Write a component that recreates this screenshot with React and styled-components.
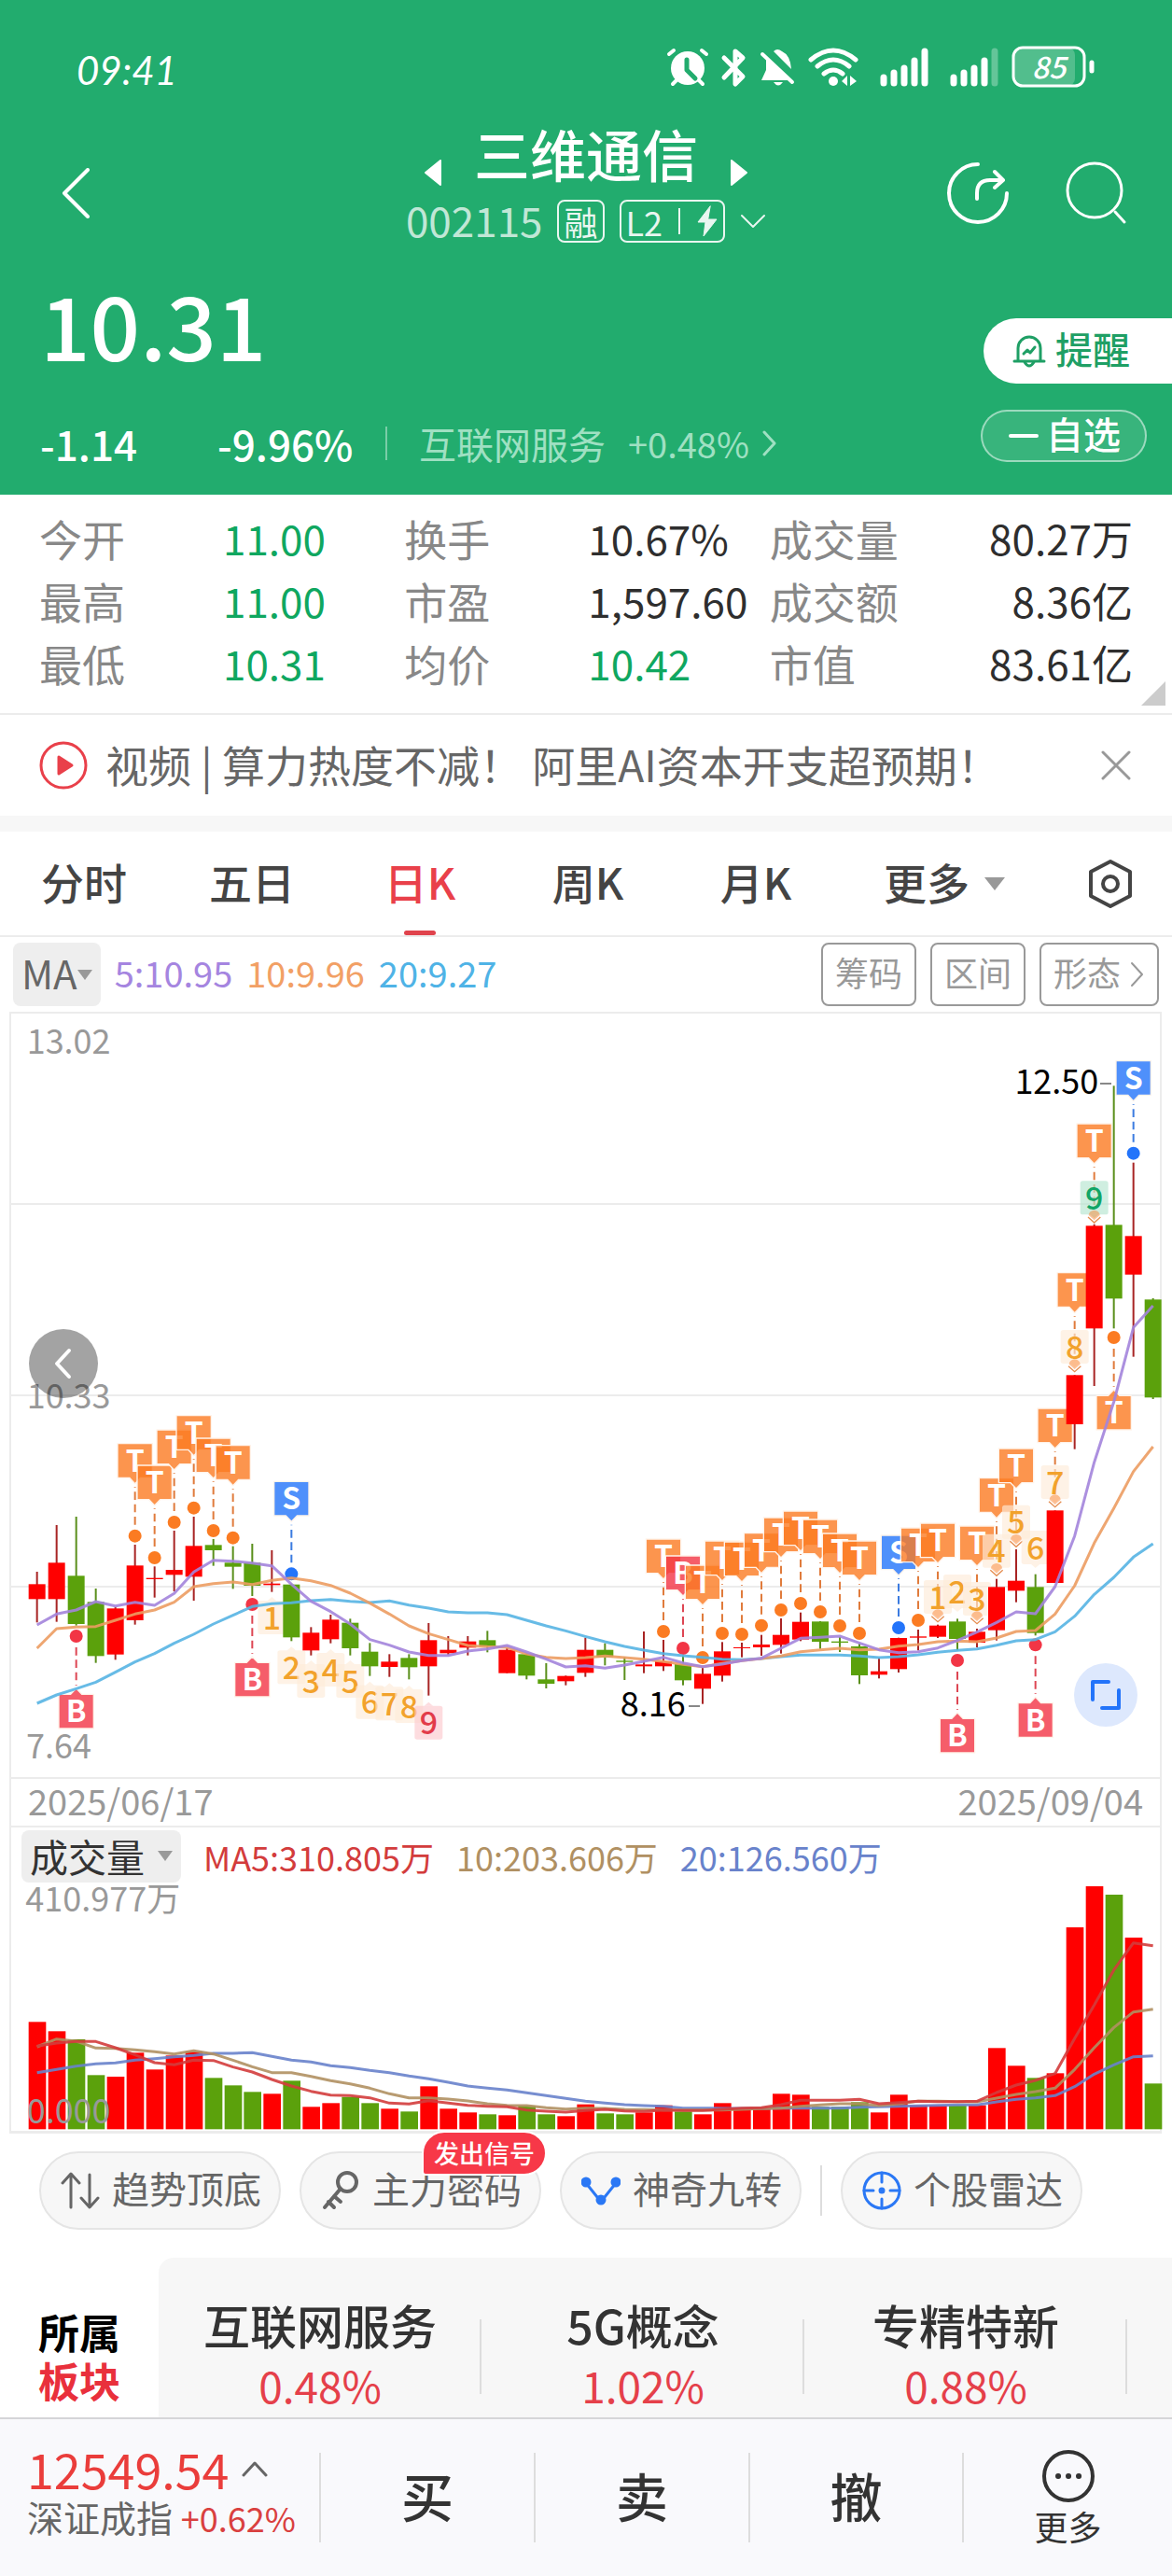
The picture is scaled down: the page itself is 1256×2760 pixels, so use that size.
import React from 'react'
import styled, { createGlobalStyle, css } from 'styled-components'

const GREEN = '#22ac6e'
const UP = '#ff0000'
const DOWN = '#5ba10c'
const FONT = '"Noto Sans CJK SC", "Noto Sans", sans-serif'

const stats = [
  [
    { label: '今开', value: '11.00', green: true },
    { label: '最高', value: '11.00', green: true },
    { label: '最低', value: '10.31', green: true },
  ],
  [
    { label: '换手', value: '10.67%' },
    { label: '市盈', value: '1,597.60' },
    { label: '均价', value: '10.42', green: true },
  ],
  [
    { label: '成交量', value: '80.27万' },
    { label: '成交额', value: '8.36亿' },
    { label: '市值', value: '83.61亿' },
  ],
]

const tabs = ['分时', '五日', '日K', '周K', '月K']

const sectors = [
  { name: '互联网服务', change: '0.48%' },
  { name: '5G概念', change: '1.02%' },
  { name: '专精特新', change: '0.88%' },
]

// [rising, high, body top, body bottom, low] in chart units, three units to a pixel
const candles = [
  [1, 1812, 1852, 1900, 1975], [1, 1662, 1783, 1900, 1973], [0, 1635, 1825, 1980, 1985],
  [0, 1866, 1909, 2083, 2105], [1, 1925, 1930, 2078, 2095], [1, 1725, 1792, 1968, 1982],
  [1, 1795, 1832, 1836, 1895], [1, 1680, 1806, 1822, 1875], [1, 1635, 1729, 1828, 1905],
  [0, 1707, 1726, 1743, 1793], [0, 1730, 1783, 1796, 1867], [0, 1722, 1783, 1857, 1890],
  [1, 1743, 1850, 1855, 1877], [0, 1850, 1853, 2023, 2035], [1, 1990, 2008, 2065, 2081],
  [1, 1950, 1966, 2029, 2042], [0, 1963, 1976, 2058, 2081], [0, 2041, 2069, 2116, 2147],
  [1, 2077, 2101, 2118, 2150], [0, 2077, 2089, 2119, 2158], [1, 1977, 2032, 2116, 2210],
  [1, 2019, 2063, 2074, 2080], [1, 2019, 2036, 2056, 2081], [0, 2002, 2032, 2052, 2071],
  [1, 2057, 2063, 2138, 2138], [0, 2074, 2077, 2146, 2158], [0, 2106, 2158, 2172, 2187],
  [1, 2146, 2147, 2164, 2177], [1, 2024, 2063, 2137, 2150], [0, 2042, 2063, 2087, 2113],
  [0, 2086, 2098, 2102, 2160], [1, 2004, 2110, 2116, 2138], [1, 2031, 2100, 2116, 2131],
  [0, 2080, 2109, 2161, 2177], [1, 2120, 2140, 2188, 2237], [1, 2038, 2068, 2146, 2165],
  [1, 2040, 2055, 2058, 2087], [1, 2015, 2046, 2055, 2082], [1, 1962, 2015, 2047, 2075],
  [1, 1943, 1973, 2030, 2035], [0, 1971, 1972, 2037, 2060], [0, 2022, 2036, 2040, 2070],
  [0, 2042, 2052, 2145, 2173], [1, 2090, 2132, 2143, 2155], [1, 2024, 2025, 2125, 2136],
  [1, 1998, 2020, 2024, 2065], [1, 1982, 1985, 2021, 2025], [0, 1963, 1972, 2028, 2065],
  [1, 1995, 2005, 2040, 2055], [1, 1835, 1861, 2000, 2033], [1, 1740, 1841, 1873, 1910],
  [0, 1820, 1861, 2009, 2017], [1, 1615, 1615, 1848, 1848], [1, 1180, 1180, 1338, 1418],
  [1, 695, 700, 1030, 1215], [0, 250, 697, 934, 1030], [1, 497, 733, 857, 1121],
  [0, 933, 937, 1252, 1257],
]

const ma5 = [
  1983, 1948, 1935, 1908, 1922, 1910, 1920, 1882, 1813, 1775, 1778, 1784, 1793, 1852, 1907,
  1940, 1980, 2030, 2048, 2070, 2081, 2081, 2067, 2060, 2049, 2070, 2093, 2118, 2114, 2122,
  2112, 2100, 2087, 2105, 2117, 2109, 2098, 2090, 2058, 2026, 2023, 2019, 2041, 2063, 2072,
  2069, 2057, 2033, 2006, 1975, 1941, 1947, 1860, 1697, 1460, 1266, 1027, 957,
]
const ma10 = [
  2058, 1995, 1990, 1988, 1968, 1948, 1935, 1910, 1860, 1850, 1845, 1853, 1840, 1832, 1841,
  1856, 1881, 1913, 1948, 1986, 2011, 2030, 2049, 2053, 2055, 2076, 2087, 2091, 2088, 2083,
  2088, 2093, 2101, 2110, 2117, 2107, 2098, 2091, 2083, 2069, 2063, 2058, 2063, 2061, 2051,
  2046, 2037, 2035, 2037, 2025, 2004, 2001, 1948, 1857, 1720, 1608, 1490, 1410,
]
const ma20 = [
  2235, 2208, 2188, 2167, 2135, 2102, 2075, 2042, 2013, 1980, 1952, 1924, 1915, 1912, 1905,
  1901, 1907, 1911, 1906, 1919, 1929, 1941, 1944, 1944, 1950, 1968, 1986, 2002, 2020, 2037,
  2052, 2064, 2075, 2082, 2087, 2093, 2095, 2091, 2085, 2080, 2080, 2080, 2083, 2088, 2085,
  2079, 2071, 2065, 2060, 2048, 2034, 2030, 2005, 1955, 1885, 1830, 1765, 1722,
]

// [day, letter, dot position, flag under the dot]
const signals = [
  [2, 'B', 2019, 1], [5, 'T', 1697], [6, 'T', 1767], [7, 'T', 1653], [8, 'T', 1607],
  [9, 'T', 1680], [10, 'T', 1703], [11, 'B', 1917, 1], [13, 'S', 1819], [32, 'T', 2004],
  [33, 'B', 2058], [34, 'T', 2088], [35, 'T', 2010], [36, 'T', 2013], [37, 'T', 1985],
  [38, 'T', 1935], [39, 'T', 1914], [40, 'T', 1941], [41, 'T', 1986], [42, 'T', 2010],
  [44, 'S', 1992], [45, 'T', 1968], [46, 'T', 1953], [47, 'B', 2097, 1], [48, 'T', 1962],
  [49, 'T', 1808], [50, 'T', 1713], [51, 'B', 2047, 1], [52, 'T', 1584], [53, 'T', 1148],
  [54, 'T', 669], [55, 'T', 1059, 1], [56, 'S', 467],
]

// [day, count, box top, box under the candle]
const counts = [
  [12, 1, 1905, 1], [13, 2, 2065, 1], [14, 3, 2109, 1], [15, 4, 2073, 1], [16, 5, 2109, 1],
  [17, 6, 2177, 1], [18, 7, 2182, 1], [19, 8, 2190, 1], [20, 9, 2243, 1], [46, 1, 1839],
  [47, 2, 1821], [48, 3, 1845], [49, 4, 1691], [50, 5, 1598], [51, 6, 1680], [52, 7, 1470],
  [53, 8, 1035], [54, 9, 556],
]

const volumes = [
  797, 827, 853, 968, 973, 896, 950, 905, 893, 977, 1001, 1022, 1028, 986, 1070, 1058, 1038,
  1058, 1076, 1085, 1004, 1076, 1088, 1094, 1097, 1067, 1094, 1100, 1062, 1091, 1094, 1088,
  1065, 1085, 1094, 1058, 1076, 1075, 1028, 1031, 1070, 1070, 1055, 1088, 1031, 1065, 1065,
  1065, 1065, 881, 938, 977, 962, 493, 361, 388, 526, 995,
]
const vol5 = [
  875, 865, 860, 860, 880, 903, 928, 935, 920, 921, 942, 958, 982, 1003, 1020, 1032, 1034,
  1041, 1058, 1061, 1050, 1058, 1065, 1068, 1070, 1080, 1084, 1087, 1082, 1078, 1083, 1085,
  1080, 1082, 1082, 1078, 1074, 1073, 1063, 1049, 1049, 1049, 1046, 1060, 1056, 1052, 1053,
  1053, 1052, 1024, 1000, 985, 963, 850, 743, 630, 543, 552,
]
const vol10 = [
  877, 852, 859, 881, 882, 887, 893, 900, 890, 900, 920, 941, 960, 960, 972, 986, 996, 1010,
  1028, 1041, 1041, 1045, 1051, 1060, 1065, 1066, 1073, 1077, 1074, 1075, 1078, 1079, 1080,
  1080, 1080, 1080, 1078, 1076, 1074, 1068, 1064, 1060, 1060, 1066, 1060, 1052, 1052, 1053,
  1054, 1042, 1030, 1021, 1010, 950, 880, 815, 765, 756,
]
const vol20 = [
  960, 950, 939, 932, 929, 920, 915, 909, 905, 898, 898, 896, 908, 920, 926, 938, 944, 953,
  960, 971, 980, 991, 1003, 1010, 1016, 1025, 1034, 1043, 1052, 1058, 1063, 1066, 1068, 1074,
  1074, 1075, 1075, 1075, 1074, 1074, 1074, 1074, 1071, 1070, 1068, 1067, 1065, 1064, 1064,
  1054, 1046, 1041, 1034, 1005, 965, 935, 909, 906,
]

const dayX = (i) => Math.round(119 + i * 62.95)
const toPoints = (values) => values.map((y, i) => `${dayX(i)},${y}`).join(' ')
const signalColors = {
  T: { fill: '#fb7b22', line: '#e07b3c' },
  B: { fill: '#f23545', line: '#dd4653' },
  S: { fill: '#2374fa', line: '#3b7be0' },
}

const hasCountAbove = (day) => counts.some((c) => c[0] === day && !c[3])

const Signal = ({ day, letter, y, below }) => {
  const x = dayX(day)
  const { fill, line } = signalColors[letter]
  const d = below ? 1 : -1
  const top = below ? y + 187 : y - 297
  return (
    <g>
      <line x1={x} x2={x} y1={y + d * 36} y2={y + d * 158} stroke={line} strokeWidth="6" strokeDasharray="26 14" />
      <path
        d={`M${x - 56} ${y + d * 297}H${x + 56}V${y + d * 187}H${x + 18}L${x} ${y + d * 168}L${x - 18} ${y + d * 187}H${x - 56}Z`}
        fill={fill}
        fillOpacity="0.8"
        stroke="#fff3ea"
        strokeWidth="4"
        strokeLinejoin="round"
      />
      {(below || !hasCountAbove(day)) && <circle cx={x} cy={y} r="21" fill={fill} />}
      <text x={x} y={top + 90} fontSize="96" fontWeight="700" fill="#fff" textAnchor="middle">{letter}</text>
    </g>
  )
}

const Count = ({ day, n, y, below }) => {
  const x = dayX(day)
  let box = '#fdebd8'
  let ink = '#f2a22c'
  if (n === 9) {
    box = below ? '#fcc9ce' : '#b5e5d0'
    ink = below ? '#e23b4a' : '#12a566'
  }
  const tip = below ? y - 12 : y + 120
  const edge = below ? y : y + 108
  return (
    <g>
      <rect x={x - 45} y={y} width="90" height="108" rx="8" fill={box} fillOpacity="0.65" />
      <path d={`M${x - 14} ${edge}L${x} ${tip}L${x + 14} ${edge}Z`} fill={box} fillOpacity="0.65" />
      {!below && day !== 47 && day !== 51 && (
        <g>
          <path d={`M${x - 18} ${y + 110}a18 16 0 0 1 36 0l-18 16z`} fill="#fb7b22" fillOpacity="0.45" />
          <path d={`M${x - 20} ${y + 116}l20 18l20 -18`} fill="none" stroke="#e58d50" strokeWidth="4" />
        </g>
      )}
      <text x={x} y={y + 92} fontSize="102" fill={ink} fontWeight="500" textAnchor="middle">{n}</text>
    </g>
  )
}

const PriceChart = () => (
  <Chart viewBox="36 18 3693 2454" role="img" aria-label="日K线图">
    {[630, 1245, 1860].map((y) => (
      <line key={y} x1="36" x2="3729" y1={y} y2={y} stroke="#ececec" strokeWidth="6" />
    ))}
    <g fontSize="108" fill="#999">
      <text x="86" y="148">13.02</text>
      <text x="86" y="1288">10.33</text>
      <text x="84" y="2412">7.64</text>
    </g>
    {signals.map(([day, letter, y, below]) => (
      <Signal key={day} day={day} letter={letter} y={y} below={below} />
    ))}
    {counts.map(([day, n, y, below]) => (
      <Count key={day} day={day} n={n} y={y} below={below} />
    ))}
    {candles.map(([rising, high, top, bottom, low], i) => (
      <g key={i} fill={rising ? UP : DOWN}>
        <rect x={dayX(i) - 3} y={high} width="6" height={low - high} fill={rising ? '#a82424' : '#5a8f1c'} />
        <rect x={dayX(i) - 27} y={top} width="54" height={bottom - top} />
      </g>
    ))}
    <g fill="none" strokeWidth="9" strokeLinejoin="round" strokeOpacity="0.9">
      <polyline points={toPoints(ma20)} stroke="#56b4e3" />
      <polyline points={toPoints(ma10)} stroke="#ec9c62" />
      <polyline points={toPoints(ma5)} stroke="#a384dc" />
    </g>
    <g fontSize="108" fill="#000" textAnchor="end">
      <text x="3532" y="277">12.50</text>
      <text x="2204" y="2276">8.16</text>
    </g>
    <path d="M3537 243H3573M2214 2244H2250" stroke="#888" strokeWidth="6" />
  </Chart>
)

const VolumeChart = () => (
  <Chart viewBox="36 358 3693 789" role="img" aria-label="成交量">
    {volumes.map((y, i) => (
      <rect key={i} x={dayX(i) - 27} y={y} width="56" height={1142 - y} fill={candles[i][0] ? UP : DOWN} />
    ))}
    <g fill="none" strokeWidth="9" strokeLinejoin="round" strokeOpacity="0.9">
      <polyline points={toPoints(vol20)} stroke="#6882cb" />
      <polyline points={toPoints(vol10)} stroke="#b09062" />
      <polyline points={toPoints(vol5)} stroke="#d33c3c" />
    </g>
    <g fontSize="108" fill="#999">
      <text x="82" y="442">410.977万</text>
      <text x="86" y="1124">0.000</text>
    </g>
  </Chart>
)

const StatusIcons = () => (
  <svg width="462" height="46" viewBox="712 49 462 46" fill="none" stroke="#fff" strokeLinecap="round" strokeLinejoin="round" aria-hidden="true">
    <circle cx="737" cy="73" r="18" fill="#fff" stroke="none" />
    <path d="M717 58l5-4M757 58l-5-4M721 90l5-5M753 90l-5-5" strokeWidth="4" />
    <path d="M736 64v11l9 9" stroke={GREEN} strokeWidth="5" />
    <path d="M776 62l20 20l-8 8V55l8 7l-20 21" strokeWidth="5" />
    <path d="M821 61v14l-5 11h29zM829 55q4-4 9 0q9 4 10 19z" fill="#fff" stroke="none" />
    <path d="M817 58l32 30" strokeWidth="4" />
    <path d="M829 88h10q-5 7-10 0z" fill="#fff" stroke="none" />
    <path d="M869 64q24-20 48 0M876 71q17-14 34 0M883 79q10-8 20 0" strokeWidth="5" />
    <circle cx="893" cy="87" r="5" fill="#fff" stroke="none" />
    <path d="M902 87l6-6v11zM911 81v11l7-5z" fill="#fff" stroke="none" />
    <path d="M947 83v6M958 78v11M969 73v16M980 65v24M991 55v34M1022 83v6M1033 78v11M1044 73v16M1055 65v24" strokeWidth="7" />
    <path d="M1066 55v34" strokeWidth="7" strokeOpacity="0.3" />
    <rect x="1087" y="51" width="65" height="41" fill="#fff" fillOpacity="0.22" stroke="none" rx="8" />
    <rect x="1086" y="51" width="76" height="41" rx="10" strokeWidth="3" />
    <path d="M1170 67v9" strokeWidth="5" />
    <text x="1124" y="84" fontSize="32" fontStyle="italic" fontWeight="500" fill="#fff" stroke="none" textAnchor="middle">85</text>
  </svg>
)

const Icon = ({ size = 48, w = size, h = size, box = '0 0 24 24', sw = 2, children }) => (
  <svg width={w} height={h} viewBox={box} fill="none" stroke="currentColor" strokeWidth={sw} strokeLinecap="round" strokeLinejoin="round" aria-hidden="true">
    {children}
  </svg>
)

const App = () => {
  return (
    <Page>
      <GlobalStyle />
      <Header>
        <StatusBar>
          <Clock>09:41</Clock>
          <StatusIcons />
        </StatusBar>
        <NavBar>
          <NavSide>
            <IconButton aria-label="返回">
              <Icon w={30} h={54} box="0 0 30 54" sw={4}><path d="M28 2L3 27L28 52" /></Icon>
            </IconButton>
          </NavSide>
          <TitleBlock>
            <TitleRow>
              <IconButton aria-label="上一只">
                <Icon w={20} h={30} box="0 0 20 30"><path d="M18 2v26L2 15z" fill="currentColor" /></Icon>
              </IconButton>
              <Title>三维通信</Title>
              <IconButton aria-label="下一只">
                <Icon w={20} h={30} box="0 0 20 30"><path d="M2 2v26L18 15z" fill="currentColor" /></Icon>
              </IconButton>
            </TitleRow>
            <CodeRow>
              <Code>002115</Code>
              <Chip>融</Chip>
              <Chip>
                L2
                <ChipDivider />
                <Icon w={24} h={34} box="0 0 24 34" sw={1}><path d="M15 1L2 18h8L8 33L22 15h-9z" fill="currentColor" /></Icon>
              </Chip>
              <Icon w={28} h={16} box="0 0 28 16" sw={2}><path d="M2 2l12 12L26 2" /></Icon>
            </CodeRow>
          </TitleBlock>
          <NavSide $end>
            <IconButton aria-label="分享">
              <Icon size={68} box="0 0 68 68" sw={4}>
                <path d="M34 3A31 31 0 1 0 65 34M33 40v-6q0-14 14-14h12M52 11l9 9l-9 8" />
              </Icon>
            </IconButton>
            <IconButton aria-label="搜索">
              <Icon size={70} box="0 0 70 70" sw={3}>
                <circle cx="33" cy="32" r="29" />
                <path d="M55 55l10 11" />
              </Icon>
            </IconButton>
          </NavSide>
        </NavBar>
        <Quote>
          <QuoteMain>
            <Price>10.31</Price>
            <ChangeRow>
              <Change $width={190}>-1.14</Change>
              <Change $width={180}>-9.96%</Change>
              <SectorLink href="#sector">
                互联网服务
                <span>+0.48%</span>
                <Icon w={16} h={28} box="0 0 16 28" sw={3}><path d="M2 2l11 12L2 26" /></Icon>
              </SectorLink>
            </ChangeRow>
          </QuoteMain>
          <QuoteActions>
            <RemindButton>
              <Icon size={40} box="0 0 40 40" sw={3}>
                <path d="M8 31V17a12 12 0 0 1 24 0v14M4 31h32M15 32q5 8 10 0M14 23l4-4l3 3l5-6" />
              </Icon>
              <Label>提醒</Label>
            </RemindButton>
            <WatchButton>
              <Icon w={32} h={4} box="0 0 32 4" sw={4}><path d="M2 2h28" /></Icon>
              <Label>自选</Label>
            </WatchButton>
          </QuoteActions>
        </Quote>
      </Header>

      <Stats>
        {stats.map((column, i) => (
          <StatColumn key={i}>
            {column.map((stat) => (
              <Stat key={stat.label} $spread={i === 2}>
                <dt>{stat.label}</dt>
                <StatValue $green={stat.green}>{stat.value}</StatValue>
              </Stat>
            ))}
          </StatColumn>
        ))}
        <Corner />
      </Stats>

      <News>
        <Icon size={54} box="0 0 54 54" sw={3}>
          <circle cx="27" cy="27" r="24" />
          <path d="M22 18v18l14-9z" fill="currentColor" />
        </Icon>
        <NewsLink href="#news">视频 | 算力热度不减！ 阿里AI资本开支超预期！</NewsLink>
        <CloseButton aria-label="关闭">
          <Icon size={32} box="0 0 32 32" sw={3}><path d="M2 2l28 28M30 2L2 30" /></Icon>
        </CloseButton>
      </News>

      <Tabs>
        {tabs.map((tab) => (
          <Tab key={tab} $active={tab === '日K'}><Label>{tab}</Label></Tab>
        ))}
        <Tab><Label>更多</Label><Caret $size={11} /></Tab>
        <Tab aria-label="设置">
          <Icon w={50} h={54} box="0 0 50 54" sw={4}>
            <path d="M25 3L46 14v26L25 51L4 40V14z" />
            <circle cx="25" cy="27" r="8" />
          </Icon>
        </Tab>
      </Tabs>

      <MaRow>
        <MaButton><Label>MA</Label><Caret $size={8} /></MaButton>
        <Legend $color="#a585e0">5:10.95</Legend>
        <Legend $color="#f2a065">10:9.96</Legend>
        <Legend $color="#4fb3e6">20:9.27</Legend>
        <OutlineButtons>
          <OutlineButton><Label>筹码</Label></OutlineButton>
          <OutlineButton><Label>区间</Label></OutlineButton>
          <OutlineButton>
            <Label>形态</Label>
            <Icon w={16} h={28} box="0 0 16 28" sw={2}><path d="M2 2l11 12L2 26" /></Icon>
          </OutlineButton>
        </OutlineButtons>
      </MaRow>

      <ChartPanel>
        <PriceArea>
          <PriceChart />
          <PreviousButton aria-label="向前">
            <Icon w={20} h={34} box="0 0 20 34" sw={4}><path d="M16 3L3 17l13 14" /></Icon>
          </PreviousButton>
          <ExpandButton aria-label="全屏">
            <Icon size={34} box="0 0 34 34" sw={4}><path d="M20 3H3v19M31 12v19H13" /></Icon>
          </ExpandButton>
        </PriceArea>
        <DateRow>
          <time>2025/06/17</time>
          <time>2025/09/04</time>
        </DateRow>
        <VolumeHeader>
          <VolumeButton>成交量<Caret $size={8} /></VolumeButton>
          <VolumeLegend $color="#d33c3c">MA5:310.805万</VolumeLegend>
          <VolumeLegend $color="#b09062">10:203.606万</VolumeLegend>
          <VolumeLegend $color="#6882cb">20:126.560万</VolumeLegend>
        </VolumeHeader>
        <VolumeChart />
      </ChartPanel>

      <Tools>
        <Tool>
          <Icon size={42} box="0 0 42 42" sw={3}>
            <path d="M11 39V4M2 13l9-10l9 10M31 4v34M22 29l9 10l9-10" />
          </Icon>
          <Label>趋势顶底</Label>
        </Tool>
        <Tool>
          <Icon size={42} box="0 0 42 42" sw={4}>
            <circle cx="28" cy="12" r="10" />
            <path d="M21 19L4 39M14 27l7 6M8 33l6 6" />
          </Icon>
          <Label>主力密码</Label>
          <Badge>发出信号</Badge>
        </Tool>
        <Tool>
          <BlueIcon>
            <Icon size={42} box="0 0 42 42" sw={3}>
              <path d="M5 13l16 20L37 13" />
              <circle cx="5" cy="12" r="4" fill="currentColor" />
              <circle cx="37" cy="12" r="4" fill="currentColor" />
              <circle cx="21" cy="31" r="4" fill="currentColor" />
            </Icon>
          </BlueIcon>
          <Label>神奇九转</Label>
        </Tool>
        <ToolDivider />
        <Tool>
          <BlueIcon>
            <Icon size={42} box="0 0 42 42" sw={3}>
              <circle cx="21" cy="21" r="19" />
              <path d="M21 2v10M21 30v10M2 21h10M30 21h10" />
              <circle cx="21" cy="21" r="2" fill="currentColor" />
            </Icon>
          </BlueIcon>
          <Label>个股雷达</Label>
        </Tool>
      </Tools>

      <Sectors id="sector">
        <SectorTitle>
          所属
          <em>板块</em>
        </SectorTitle>
        <SectorList>
          {sectors.map((sector) => (
            <Sector key={sector.name}>
              <SectorName>{sector.name}</SectorName>
              <SectorChange>{sector.change}</SectorChange>
            </Sector>
          ))}
        </SectorList>
      </Sectors>

      <BottomBar>
        <IndexBlock>
          <IndexValue>
            12549.54
            <Icon w={28} h={18} box="0 0 28 18" sw={3}><path d="M2 16L14 3l12 13" /></Icon>
          </IndexValue>
          <IndexName>
            深证成指 <b>+0.62%</b>
          </IndexName>
        </IndexBlock>
        <TradeButton>买</TradeButton>
        <TradeButton>卖</TradeButton>
        <TradeButton>撤</TradeButton>
        <MoreButton>
          <Icon size={58} box="0 0 58 58" sw={4}>
            <circle cx="29" cy="29" r="26" />
            <path d="M18 29h.1M29 29h.1M40 29h.1" strokeWidth="6" />
          </Icon>
          更多
        </MoreButton>
      </BottomBar>
    </Page>
  )
}

export default App

const GlobalStyle = createGlobalStyle`
  * {
    box-sizing: border-box;
  }

  body {
    margin: 0;
    background: #fff;
    font-family: ${FONT};
    color: #333;
  }

  button {
    margin: 0;
    padding: 0;
    border: 0;
    background: none;
    color: inherit;
    font: inherit;
    cursor: pointer;
  }

  a {
    color: inherit;
    text-decoration: none;
  }

  svg {
    display: block;
    flex: none;
  }
`;

const Page = styled.main`
  overflow: hidden;
  white-space: nowrap;
`;

const Label = styled.span`
  padding-bottom: 6px;
`;

const Header = styled.header`
  background: ${GREEN};
  color: #fff;
`;

const StatusBar = styled.div`
  display: flex;
  align-items: center;
  justify-content: space-between;
  height: 132px;
  padding: 12px 82px 0;
`;

const Clock = styled.time`
  padding-top: 6px;
  font-family: Lato, sans-serif;
  font-size: 42px;
  font-style: italic;
  line-height: 48px;
`;

const NavBar = styled.nav`
  display: grid;
  grid-template-columns: 1fr auto 1fr;
  align-items: center;
`;

const NavSide = styled.div`
  display: flex;
  align-items: center;
  justify-content: ${(p) => (p.$end ? 'flex-end' : 'flex-start')};
  gap: 58px;
  padding: 22px 46px 0 66px;
`;

const IconButton = styled.button`
  display: flex;
`;

const TitleBlock = styled.div`
  display: flex;
  flex-direction: column;
  align-items: center;
  gap: 14px;
`;

const TitleRow = styled.div`
  display: flex;
  align-items: flex-end;
  gap: 34px;
`;

const Title = styled.h1`
  margin: 0;
  padding-bottom: 4px;
  font-size: 60px;
  font-weight: 500;
  line-height: 64px;
`;

const CodeRow = styled.div`
  display: flex;
  align-items: center;
  gap: 16px;
  height: 46px;
  opacity: 0.9;
`;

const Code = styled.span`
  padding-bottom: 4px;
  font-size: 44px;
  line-height: 46px;
  opacity: 0.8;
`;

const Chip = styled.span`
  display: flex;
  align-items: center;
  gap: 17px;
  height: 46px;
  padding: 0 5px;
  border: 2px solid #fff;
  border-radius: 8px;
  font-size: 36px;
  line-height: 40px;
`;

const ChipDivider = styled.i`
  width: 2px;
  height: 28px;
  background: #fff;
`;

const Quote = styled.section`
  display: flex;
  justify-content: space-between;
  padding: 36px 0 27px 43px;
`;

const QuoteMain = styled.div`
  display: flex;
  flex-direction: column;
  gap: 51px;
`;

const Price = styled.strong`
  font-size: 94px;
  font-weight: 500;
  line-height: 100px;
`;

const ChangeRow = styled.div`
  display: flex;
  align-items: center;
  line-height: 56px;
`;

const Change = styled.span`
  min-width: ${(p) => p.$width}px;
  font-size: 44px;
  font-weight: 500;
`;

const SectorLink = styled.a`
  display: flex;
  align-items: center;
  gap: 14px;
  height: 36px;
  padding-left: 34px;
  border-left: 2px solid rgba(255, 255, 255, 0.4);
  color: #9fe0c2;
  font-size: 40px;

  span {
    padding-left: 10px;
    font-size: 38px;
  }
`;

const QuoteActions = styled.div`
  display: flex;
  flex-direction: column;
  align-items: flex-end;
  gap: 28px;
  padding-top: 45px;
`;

const RemindButton = styled.button`
  display: flex;
  align-items: center;
  gap: 8px;
  height: 70px;
  padding: 0 45px 0 29px;
  border-radius: 35px 0 0 35px;
  background: #fff;
  color: #1f9f65;
  font-size: 40px;
  font-weight: 500;
`;

const WatchButton = styled.button`
  display: flex;
  align-items: center;
  gap: 8px;
  height: 56px;
  margin-right: 27px;
  padding: 0 26px 0 28px;
  border: 2px solid rgba(255, 255, 255, 0.5);
  border-radius: 28px;
  background: rgba(255, 255, 255, 0.1);
  font-size: 40px;
  font-weight: 500;
  line-height: 48px;
`;

const Stats = styled.section`
  position: relative;
  display: grid;
  grid-template-columns: 391fr 391fr 389fr;
  padding: 13px 42px 20px 42px;
  border-bottom: 2px solid #ececec;
`;

const StatColumn = styled.dl`
  margin: 0;
`;

const Stat = styled.div`
  display: grid;
  grid-template-columns: ${(p) => (p.$spread ? 'auto auto' : '197px auto')};
  justify-content: ${(p) => (p.$spread ? 'space-between' : 'start')};
  font-size: 46px;
  line-height: 67px;
  color: #888;
`;

const StatValue = styled.dd`
  margin: 0;
  font-size: 44px;
  color: ${(p) => (p.$green ? '#0fa760' : '#2e2e2e')};
`;

const Corner = styled.i`
  position: absolute;
  right: 7px;
  bottom: 8px;
  border: 13px solid transparent;
  border-right-color: #ccc;
  border-bottom-color: #ccc;
`;

const News = styled.section`
  display: flex;
  align-items: center;
  gap: 18px;
  height: 108px;
  padding: 0 44px 0 41px;
  color: #e9404a;
`;

const NewsLink = styled.a`
  flex: 1;
  padding-bottom: 4px;
  font-size: 46px;
  line-height: 60px;
  color: #666;
`;

const CloseButton = styled(IconButton)`
  color: #999;
`;

const Tabs = styled.nav`
  display: grid;
  grid-template-columns: repeat(5, 180fr) 224fr 132fr;
  height: 130px;
  border-top: 17px solid #f7f7f7;
  border-bottom: 2px solid #ececec;
`;

const Tab = styled.button`
  position: relative;
  display: flex;
  align-items: center;
  justify-content: center;
  gap: 16px;
  font-size: 46px;
  font-weight: 500;
  color: #444;

  ${(p) => p.$active && css`
    color: #e9404a;

    &::after {
      content: '';
      position: absolute;
      bottom: 0;
      width: 34px;
      height: 5px;
      border-radius: 3px;
      background: #e0434c;
    }
  `}
`;

const Caret = styled.i`
  border: ${(p) => p.$size}px solid transparent;
  border-top: ${(p) => p.$size + 3}px solid #999;
  border-bottom: 0;
`;

const MaRow = styled.div`
  display: flex;
  align-items: center;
  gap: 15px;
  height: 80px;
  padding: 0 14px;
`;

const MaButton = styled.button`
  display: flex;
  align-items: center;
  height: 68px;
  padding: 0 9px;
  border-radius: 8px;
  background: #eee;
  font-size: 42px;
  color: #666;
`;

const Legend = styled.span`
  padding-bottom: 6px;
  font-size: 38px;
  color: ${(p) => p.$color};
`;

const OutlineButtons = styled.div`
  display: flex;
  gap: 15px;
  margin-left: auto;
`;

const OutlineButton = styled.button`
  display: flex;
  align-items: center;
  gap: 10px;
  height: 68px;
  padding: 0 13px;
  border: 2px solid #999;
  border-radius: 8px;
  font-size: 36px;
  color: #999;
`;

const ChartPanel = styled.section`
  margin: 0 11px 0 10px;
  border: 2px solid #ececec;
  border-bottom-width: 3px;
`;

const Chart = styled.svg`
  width: 100%;
  height: auto;
  overflow: visible;
`;

const PriceArea = styled.div`
  position: relative;
`;

const PreviousButton = styled.button`
  position: absolute;
  top: 338px;
  left: 19px;
  display: grid;
  place-items: center;
  width: 74px;
  height: 74px;
  border-radius: 50%;
  background: rgba(0, 0, 0, 0.36);
  color: #fff;
`;

const ExpandButton = styled.button`
  position: absolute;
  right: 24px;
  bottom: 54px;
  display: grid;
  place-items: center;
  width: 68px;
  height: 68px;
  border-radius: 50%;
  background: #dde8fd;
  color: #2374fa;
`;

const DateRow = styled.div`
  display: flex;
  justify-content: space-between;
  padding: 0 18px 4px;
  border: solid #ececec;
  border-width: 2px 0;
  font-size: 38px;
  line-height: 46px;
  color: #999;
`;

const VolumeHeader = styled.div`
  display: flex;
  align-items: center;
  gap: 24px;
  height: 62px;
  padding-left: 11px;
`;

const VolumeButton = styled.button`
  display: flex;
  align-items: center;
  gap: 14px;
  height: 56px;
  padding: 0 9px 2px;
  border-radius: 8px;
  background: #eee;
  font-size: 41px;
  line-height: 54px;
  color: #333;
`;

const VolumeLegend = styled(Legend)`
  padding-bottom: 0;
  font-size: 36px;
`;

const Tools = styled.div`
  display: flex;
  align-items: center;
  gap: 20px;
  padding: 19px 42px 30px;
`;

const Tool = styled.button`
  position: relative;
  display: flex;
  align-items: center;
  gap: 13px;
  height: 84px;
  padding: 0 19px 0 21px;
  border: 2px solid #e5e5e5;
  border-radius: 42px;
  background: #f7f7f7;
  font-size: 40px;
  color: #666;
`;

const BlueIcon = styled.span`
  color: #2b78f5;
`;

const Badge = styled.span`
  position: absolute;
  top: -24px;
  right: -8px;
  padding: 0 11px;
  border: 2px solid #fff;
  border-radius: 24px 24px 24px 4px;
  background: #f73848;
  font-size: 27px;
  font-weight: 500;
  line-height: 44px;
  color: #fff;
`;

const ToolDivider = styled.i`
  width: 2px;
  height: 54px;
  background: #ddd;
`;

const Sectors = styled.section`
  display: flex;
  height: 171px;
`;

const SectorTitle = styled.h2`
  display: flex;
  flex-direction: column;
  width: 170px;
  margin: 0;
  padding: 53px 0 0 41px;
  font-size: 44px;
  font-weight: 700;
  line-height: 52px;
  color: #000;

  em {
    font-style: normal;
    color: #e9303c;
  }
`;

const SectorList = styled.div`
  display: flex;
  flex: 1;
  padding: 38px 48px 0 0;
  border-radius: 16px 0 0;
  background: #f7f7f7;
`;

const Sector = styled.div`
  position: relative;
  flex: 1;
  text-align: center;

  &::after {
    content: '';
    position: absolute;
    top: 28px;
    right: 0;
    width: 2px;
    height: 80px;
    background: #ddd;
  }
`;

const SectorName = styled.div`
  font-size: 50px;
  font-weight: 500;
  line-height: 66px;
  color: #333;
`;

const SectorChange = styled.div`
  font-size: 46px;
  line-height: 64px;
  color: #e5404a;
`;

const BottomBar = styled.footer`
  display: grid;
  grid-template-columns: 342fr 230fr 230fr 229fr 225fr;
  height: 170px;
  border-top: 2px solid #d5d5d8;
  background: #f9f9fc;
`;

const barDivider = css`
  border-left: 2px solid #ddd;
`;

const IndexBlock = styled.div`
  padding: 23px 0 0 29px;
`;

const IndexValue = styled.div`
  display: flex;
  align-items: center;
  gap: 14px;
  font-size: 52px;
  line-height: 60px;
  color: #ea3d3b;

  svg {
    color: #666;
  }
`;

const IndexName = styled.div`
  font-size: 39px;
  line-height: 42px;
  color: #666;

  b {
    font-size: 36px;
    font-weight: 400;
    color: #d9403f;
  }
`;

const TradeButton = styled.button`
  ${barDivider}
  height: 96px;
  margin-top: 36px;
  padding-bottom: 6px;
  font-size: 56px;
  font-weight: 500;
  line-height: 90px;
`;

const MoreButton = styled.button`
  ${barDivider}
  display: flex;
  flex-direction: column;
  align-items: center;
  justify-content: center;
  gap: 2px;
  height: 96px;
  margin-top: 36px;
  font-size: 36px;
  line-height: 44px;
`;
